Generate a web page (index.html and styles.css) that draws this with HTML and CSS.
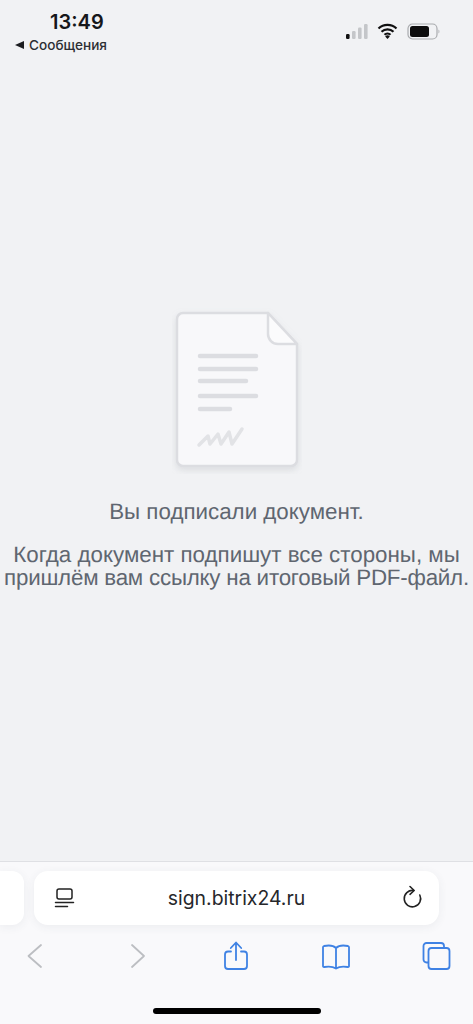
FILE: index.html
```html
<!DOCTYPE html>
<html>
<head>
    <title>sign.bitrix24.ru</title>
    <link rel="stylesheet" href="styles.css">
</head>
<body>
    <div class="status-bar">
        <div class="status-left">
            <div class="time">13:49</div>
            <div class="back-app"><span class="back-arrow"></span>Сообщения</div>
        </div>
        <div class="status-right">
            <svg width="24" height="16" viewBox="0 0 24 16">
                <rect x="1" y="11" width="3.6" height="5" rx="1.2" fill="#111"/>
                <rect x="7" y="8" width="3.6" height="8" rx="1.2" fill="#c4c6c9"/>
                <rect x="13" y="4.500" width="3.600" height="11.500" rx="1.2" fill="#c4c6c9"/>
                <rect x="19" y="1" width="3.600" height="15" rx="1.2" fill="#c4c6c9"/>
            </svg>
            <svg width="21" height="16" viewBox="0 0 21 16">
                <path d="M1.500 5.500a13 13 0 0 1 18 0M4.500 8.800a8.700 8.700 0 0 1 12 0M7.500 11.800a4.300 4.300 0 0 1 6 0" fill="none" stroke="#111" stroke-width="2.200"/>
                <path d="M10.500 16l-2.300-2.600a3.300 3.300 0 0 1 4.600 0z" fill="#111"/>
            </svg>
            <svg class="battery" width="34" height="17" viewBox="0 0 34 17">
                <rect x="1" y="1" width="29" height="15" rx="4.500" fill="none" stroke="#a9abae" stroke-width="1.200"/>
                <rect x="3" y="3" width="19" height="11" rx="2.500" fill="#0c0c0c"/>
                <path d="M31.500 6.500c1.200.4 1.200 3.600 0 4z" fill="#a9abae"/>
            </svg>
        </div>
    </div>

    <div class="content">
        <svg class="doc-icon" width="130" height="166" viewBox="0 0 130 166">
            <defs>
                <filter id="docShadow" x="-20%" y="-20%" width="140%" height="140%">
                    <feDropShadow dx="0" dy="3" stdDeviation="3" flood-color="#9a9ea6" flood-opacity="0.25"/>
                </filter>
            </defs>
            <path d="M11 5h85l29 31v116a6 6 0 0 1-6 6H11a6 6 0 0 1-6-6V11a6 6 0 0 1 6-6z" fill="#f8f8fa" stroke="#dcdde1" stroke-width="2.500" filter="url(#docShadow)"/>
            <path d="M96 5l29 31h-19a10 10 0 0 1-10-10z" fill="#fbfbfc" stroke="#dcdde1" stroke-width="2.500" stroke-linejoin="round"/>
            <g stroke="#dcdde1" stroke-width="4.500" stroke-linecap="round">
                <line x1="28" y1="48" x2="84" y2="48"/>
                <line x1="28" y1="61" x2="84" y2="61"/>
                <line x1="28" y1="73" x2="74" y2="73"/>
                <line x1="28" y1="88" x2="84" y2="88"/>
                <line x1="28" y1="101" x2="58" y2="101"/>
            </g>
            <path d="M27 137l9-9 2 8 8-10 3 10 8-12 3 12 10-15" fill="none" stroke="#e2e3e6" stroke-width="3.500" stroke-linecap="round" stroke-linejoin="round"/>
        </svg>
        <p class="message first">Вы подписали документ.</p>
        <p class="message">Когда документ подпишут все стороны, мы<br><span class="message-tail">пришлём вам ссылку на итоговый PDF-файл.</span></p>
    </div>

    <div class="browser-bar">
        <div class="tabs-row">
            <div class="pill-prev"></div>
            <div class="pill">
                <svg width="26" height="26" viewBox="0 0 26 26">
                    <rect x="5" y="4" width="15" height="10" rx="2" fill="none" stroke="#222" stroke-width="1.500"/>
                    <path d="M3.500 17.500h18M3.500 21.500h12" stroke="#222" stroke-width="1.500" stroke-linecap="round"/>
                </svg>
                <span class="url">sign.bitrix24.ru</span>
                <svg width="26" height="26" viewBox="0 0 26 26">
                    <path d="M14.500 5.500a8.200 8.200 0 1 0 6.300 4.500" fill="none" stroke="#222" stroke-width="1.600" stroke-linecap="round"/>
                    <path d="M11 1.500l4.200 4-4.200 3.800" fill="none" stroke="#222" stroke-width="1.600" stroke-linecap="round" stroke-linejoin="round"/>
                </svg>
            </div>
        </div>
        <div class="toolbar">
            <svg width="30" height="30" viewBox="0 0 30 30">
                <path d="M21 4L8.500 15 21 26" fill="none" stroke="#bcbec2" stroke-width="1.800" stroke-linecap="round" stroke-linejoin="round"/>
            </svg>
            <svg width="30" height="30" viewBox="0 0 30 30">
                <path d="M12 4l12 11-12 11" fill="none" stroke="#bcbec2" stroke-width="1.800" stroke-linecap="round" stroke-linejoin="round"/>
            </svg>
            <svg width="30" height="30" viewBox="0 0 30 30">
                <path d="M10 10.500H7a3 3 0 0 0-3 3V25a3 3 0 0 0 3 3h16a3 3 0 0 0 3-3V13.500a3 3 0 0 0-3-3h-3" fill="none" stroke="#3f82e4" stroke-width="1.800" stroke-linecap="round"/>
                <path d="M15 19V2M9.800 7L15 1.500 20.200 7" fill="none" stroke="#3f82e4" stroke-width="1.800" stroke-linecap="round" stroke-linejoin="round"/>
            </svg>
            <svg width="30" height="30" viewBox="0 0 30 30">
                <path d="M15 7c-2.500-2.500-7-3-12-2-.7.200-1 .6-1 1.300V25c0 .8.500 1.100 1.200 1 4.800-.8 8.800-.5 11.800 1.500 3-2 7-2.300 11.800-1.500.7.100 1.200-.2 1.200-1V6.300c0-.7-.3-1.100-1-1.300-5-1-9.500-.5-12 2zM15 7v20" fill="none" stroke="#3f82e4" stroke-width="1.800" stroke-linejoin="round"/>
            </svg>
            <svg width="30" height="30" viewBox="0 0 30 30">
                <path d="M7 21.500H5.500a3 3 0 0 1-3-3V5a3 3 0 0 1 3-3H20a3 3 0 0 1 3 3v1.500" fill="none" stroke="#3f82e4" stroke-width="1.800"/>
                <rect x="7.500" y="7" width="21" height="21" rx="3" fill="none" stroke="#3f82e4" stroke-width="1.800"/>
            </svg>
        </div>
        <div class="home-row">
            <div class="home-indicator"></div>
        </div>
    </div>
</body>
</html>
```

FILE: styles.css
```css
body {
    background-color: #f1f2f4;
    display: flex;
    flex-direction: column;
    height: 1024px;
    margin: 0;
    overflow: hidden;
    font-family: 'Liberation Sans', Arial, sans-serif;
}
.status-bar {
    display: flex;
    justify-content: space-between;
    height: 60px;
    box-sizing: border-box;
    padding: 11px 0 0 15px;
    flex-shrink: 0;
}
.time {
    margin-left: 35px;
    font-family: 'Inter', sans-serif;
    font-size: 20px;
    font-weight: 600;
    line-height: 22px;
    color: #16171a;
}
.back-app {
    display: flex;
    align-items: center;
    margin-top: 4px;
    font-family: 'Inter', sans-serif;
    font-size: 13.6px;
    font-weight: 500;
    line-height: 16px;
    color: #2c2e33;
}
.back-arrow {
    width: 0;
    height: 0;
    margin-right: 5px;
    border-top: 4px solid transparent;
    border-bottom: 4px solid transparent;
    border-right: 9px solid #1c1d20;
}
.status-right {
    display: flex;
    align-items: center;
    gap: 8px;
    height: 40px;
    padding-right: 32px;
}
.battery {
    margin-left: 1px;
}
.content {
    flex: 1;
    display: flex;
    flex-direction: column;
    align-items: center;
    padding-top: 248px;
}
.doc-icon {
    display: block;
}
.message {
    margin: 20px 0 0;
    font-size: 22.35px;
    line-height: 23px;
    text-align: center;
    white-space: nowrap;
    text-rendering: geometricPrecision;
    color: #5f6670;
}
.message.first {
    margin-top: 26px;
}
.message-tail {
    letter-spacing: -0.22px;
}
.browser-bar {
    height: 163px;
    box-sizing: border-box;
    flex-shrink: 0;
    background-color: #f9f9fb;
    border-top: 1px solid #dfe0e4;
    padding-top: 9px;
}
.tabs-row {
    display: flex;
    gap: 10px;
    height: 54px;
}
.pill-prev {
    width: 24px;
    background-color: #fff;
    border-radius: 0 12px 12px 0;
    box-shadow: 0 2px 10px rgba(60, 64, 80, 0.07);
}
.pill {
    width: 405px;
    box-sizing: border-box;
    display: flex;
    align-items: center;
    justify-content: space-between;
    padding: 0 14px 0 18px;
    background-color: #fff;
    border-radius: 14px;
    box-shadow: 0 2px 10px rgba(60, 64, 80, 0.07);
}
.url {
    margin-right: 4px;
    font-family: 'Inter', sans-serif;
    font-size: 19.4px;
    color: #26272b;
}
.toolbar {
    display: flex;
    justify-content: space-between;
    padding: 16px 22px 0 20px;
}
.toolbar svg {
    display: block;
}
.home-row {
    display: flex;
    justify-content: center;
    padding-top: 37px;
}
.home-indicator {
    width: 168px;
    height: 6px;
    border-radius: 3px;
    background-color: #000;
}
```
